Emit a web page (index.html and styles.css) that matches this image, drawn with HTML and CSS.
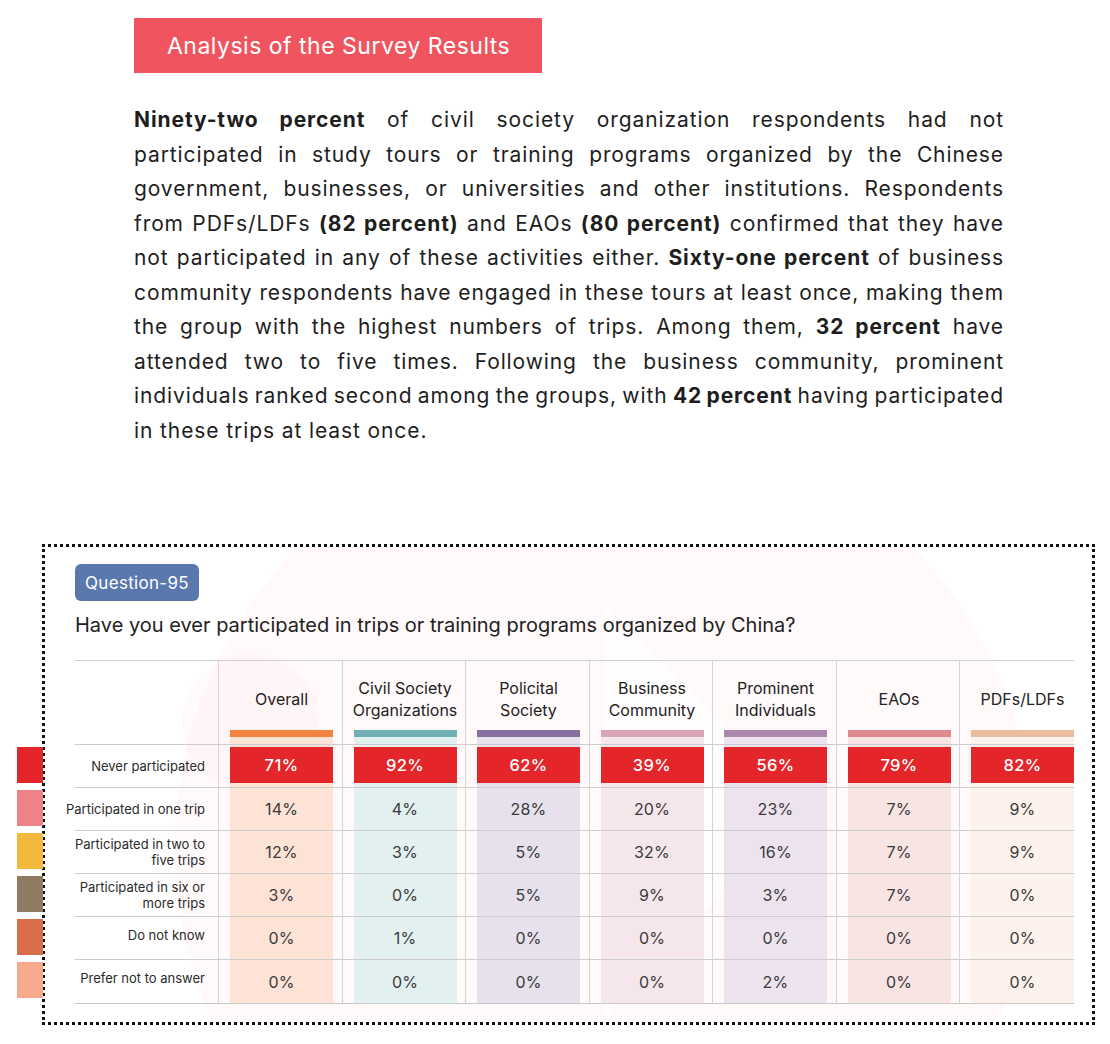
FILE: index.html
```html
<!DOCTYPE html>
<html lang="en">
<head>
<meta charset="utf-8">
<title>Analysis of the Survey Results</title>
<link rel="stylesheet" href="styles.css">
</head>
<body>
<main class="page">
  <h1 class="banner">Analysis of the Survey Results</h1>

  <p class="intro">
    <span class="ln"><b>Ninety-two percent</b> of civil society organization respondents had not</span>
    <span class="ln">participated in study tours or training programs organized by the Chinese</span>
    <span class="ln">government, businesses, or universities and other institutions. Respondents</span>
    <span class="ln">from PDFs/LDFs <b>(82 percent)</b> and EAOs <b>(80 percent)</b> confirmed that they have</span>
    <span class="ln">not participated in any of these activities either. <b>Sixty-one percent</b> of business</span>
    <span class="ln">community respondents have engaged in these tours at least once, making them</span>
    <span class="ln">the group with the highest numbers of trips. Among them, <b>32 percent</b> have</span>
    <span class="ln">attended two to five times. Following the business community, prominent</span>
    <span class="ln">individuals ranked second among the groups, with <b>42 percent</b> having participated</span>
    <span class="ln">in these trips at least once.</span>
  </p>

  <section class="card">
    <svg class="watermark" width="1047" height="475" viewBox="0 0 1047 475" aria-hidden="true">
      <circle cx="560" cy="300" r="430" fill="#f04a55" fill-opacity="0.03"/>
      <path d="M560 60 L760 260 L560 470 Z" fill="#ffffff" fill-opacity="0.6"/>
      <circle cx="205" cy="175" r="68" fill="#f04a55" fill-opacity="0.025"/>
    </svg>

    <div class="badge">Question-95</div>
    <h2 class="question">Have you ever participated in trips or training programs organized by China?</h2>

    <div class="table">
      <div class="row head">
        <div class="label"></div>
        <div class="hcell overall"><span class="hname">Overall</span><span class="hbar"></span><span class="htint"></span></div>
        <div class="hcell cso"><span class="hname">Civil Society<br>Organizations</span><span class="hbar"></span><span class="htint"></span></div>
        <div class="hcell pol"><span class="hname">Policital<br>Society</span><span class="hbar"></span><span class="htint"></span></div>
        <div class="hcell bus"><span class="hname">Business<br>Community</span><span class="hbar"></span><span class="htint"></span></div>
        <div class="hcell pro"><span class="hname">Prominent<br>Individuals</span><span class="hbar"></span><span class="htint"></span></div>
        <div class="hcell eao"><span class="hname">EAOs</span><span class="hbar"></span><span class="htint"></span></div>
        <div class="hcell pdf"><span class="hname">PDFs/LDFs</span><span class="hbar"></span><span class="htint"></span></div>
      </div>

      <div class="row top">
        <div class="label"><span class="swatch sw-red"></span><span class="ltext">Never participated</span></div>
        <div class="cell overall"><span class="fill"><span class="hi">71%</span></span></div>
        <div class="cell cso"><span class="fill"><span class="hi">92%</span></span></div>
        <div class="cell pol"><span class="fill"><span class="hi">62%</span></span></div>
        <div class="cell bus"><span class="fill"><span class="hi">39%</span></span></div>
        <div class="cell pro"><span class="fill"><span class="hi">56%</span></span></div>
        <div class="cell eao"><span class="fill"><span class="hi">79%</span></span></div>
        <div class="cell pdf"><span class="fill"><span class="hi">82%</span></span></div>
      </div>

      <div class="row">
        <div class="label"><span class="swatch sw-pink"></span><span class="ltext">Participated in one trip</span></div>
        <div class="cell overall"><span class="fill">14%</span></div>
        <div class="cell cso"><span class="fill">4%</span></div>
        <div class="cell pol"><span class="fill">28%</span></div>
        <div class="cell bus"><span class="fill">20%</span></div>
        <div class="cell pro"><span class="fill">23%</span></div>
        <div class="cell eao"><span class="fill">7%</span></div>
        <div class="cell pdf"><span class="fill">9%</span></div>
      </div>

      <div class="row">
        <div class="label"><span class="swatch sw-yellow"></span><span class="ltext">Participated in two to<br>five trips</span></div>
        <div class="cell overall"><span class="fill">12%</span></div>
        <div class="cell cso"><span class="fill">3%</span></div>
        <div class="cell pol"><span class="fill">5%</span></div>
        <div class="cell bus"><span class="fill">32%</span></div>
        <div class="cell pro"><span class="fill">16%</span></div>
        <div class="cell eao"><span class="fill">7%</span></div>
        <div class="cell pdf"><span class="fill">9%</span></div>
      </div>

      <div class="row">
        <div class="label"><span class="swatch sw-brown"></span><span class="ltext">Participated in six or<br>more trips</span></div>
        <div class="cell overall"><span class="fill">3%</span></div>
        <div class="cell cso"><span class="fill">0%</span></div>
        <div class="cell pol"><span class="fill">5%</span></div>
        <div class="cell bus"><span class="fill">9%</span></div>
        <div class="cell pro"><span class="fill">3%</span></div>
        <div class="cell eao"><span class="fill">7%</span></div>
        <div class="cell pdf"><span class="fill">0%</span></div>
      </div>

      <div class="row">
        <div class="label up"><span class="swatch sw-orange"></span><span class="ltext">Do not know</span></div>
        <div class="cell overall"><span class="fill">0%</span></div>
        <div class="cell cso"><span class="fill">1%</span></div>
        <div class="cell pol"><span class="fill">0%</span></div>
        <div class="cell bus"><span class="fill">0%</span></div>
        <div class="cell pro"><span class="fill">0%</span></div>
        <div class="cell eao"><span class="fill">0%</span></div>
        <div class="cell pdf"><span class="fill">0%</span></div>
      </div>

      <div class="row last">
        <div class="label up"><span class="swatch sw-peach"></span><span class="ltext">Prefer not to answer</span></div>
        <div class="cell overall"><span class="fill">0%</span></div>
        <div class="cell cso"><span class="fill">0%</span></div>
        <div class="cell pol"><span class="fill">0%</span></div>
        <div class="cell bus"><span class="fill">0%</span></div>
        <div class="cell pro"><span class="fill">2%</span></div>
        <div class="cell eao"><span class="fill">0%</span></div>
        <div class="cell pdf"><span class="fill">0%</span></div>
      </div>
    </div>
  </section>
</main>
</body>
</html>
```

FILE: styles.css
```css
* { box-sizing: border-box; }

html, body {
  margin: 0;
  padding: 0;
  background: #ffffff;
}

body {
  font-family: Inter, "Liberation Sans", sans-serif;
  color: #1f1f1f;
}

.page {
  width: 1110px;
  padding: 18px 0 0 42px;
}

.banner {
  margin: 0 0 0 92px;
  width: 408px;
  height: 55px;
  padding-left: 33px;
  display: flex;
  align-items: center;
  background: #f0555f;
  color: #ffffff;
  font-size: 23px;
  font-weight: 400;
  letter-spacing: 0.5px;
}

.intro {
  margin: 30px 0 0 92px;
  width: 870px;
  font-size: 21px;
  line-height: 34.5px;
  color: #1e1e1e;
  letter-spacing: 0.9px;
  word-spacing: -3px;
}

.intro b { font-weight: 700; }

.intro .ln {
  display: block;
  white-space: nowrap;
  text-align: justify;
  text-align-last: justify;
}

.intro .ln:last-child {
  text-align-last: left;
  word-spacing: 0;
}

.card {
  position: relative;
  margin-top: 96px;
  width: 1053px;
  border: 3px dotted #111111;
  padding: 17px 18px 18px 30px;
}

.watermark {
  position: absolute;
  left: 0;
  top: 0;
  pointer-events: none;
}

.badge {
  position: relative;
  display: flex;
  align-items: center;
  justify-content: center;
  width: 124px;
  height: 37px;
  border-radius: 6px;
  background: #5b78ae;
  color: #ffffff;
  font-size: 17px;
  letter-spacing: 0.3px;
}

.question {
  position: relative;
  margin: 11px 0 0;
  font-size: 20px;
  font-weight: 400;
  line-height: 26px;
  color: #222222;
  letter-spacing: 0;
}

.table {
  position: relative;
  margin-top: 22px;
  width: 999px;
  border-top: 1px solid #cfcfcf;
}

.row {
  position: relative;
  display: grid;
  grid-template-columns: 143px repeat(6, 123.5px) 115px;
  height: 43px;
  border-bottom: 1px solid #cdcdcd;
}

.row.head { height: 84px; }
.row.last { height: 44px; border-bottom-color: #c8c8c8; }

.label {
  display: flex;
  align-items: center;
  justify-content: flex-end;
  text-align: right;
  padding-right: 13px;
  font-size: 13px;
  line-height: 16px;
  color: #2a2a2a;
}

.ltext {
  white-space: nowrap;
  flex-shrink: 0;
}

.label.up { align-items: flex-start; padding-top: 10px; }

.swatch {
  position: absolute;
  left: -58px;
  top: 2px;
  width: 26px;
  height: 36px;
}

.sw-red { background: #e42529; }
.sw-pink { background: #ef8189; }
.sw-yellow { background: #f2b93c; }
.sw-brown { background: #8f7b62; }
.sw-orange { background: #d96f4a; }
.sw-peach { background: #f6a98d; }

.hcell, .cell {
  border-left: 1px solid #d5d5d5;
  padding-left: 11px;
}

.hcell {
  display: flex;
  flex-direction: column;
}

.hname {
  flex: 1;
  width: 103px;
  display: flex;
  align-items: center;
  justify-content: center;
  text-align: center;
  padding-top: 6px;
  font-size: 16px;
  line-height: 22px;
  color: #222222;
  white-space: nowrap;
}

.hbar {
  width: 103px;
  height: 7px;
}

.htint {
  width: 103px;
  height: 7px;
}

.fill {
  width: 103px;
  height: 100%;
  display: flex;
  align-items: center;
  justify-content: center;
  font-size: 16px;
  font-weight: 400;
  color: #3a3a3a;
  letter-spacing: 0.2px;
}

.row.top .fill { padding: 2px 0 4px; }

.hi {
  width: 103px;
  height: 100%;
  display: flex;
  align-items: center;
  justify-content: center;
  background: #e42529;
  color: #ffffff;
  font-weight: 500;
  font-size: 16.5px;
  letter-spacing: 0.4px;
}

.overall .hbar { background: #f2843f; }
.cso .hbar { background: #70b0b4; }
.pol .hbar { background: #876fa0; }
.bus .hbar { background: #d9a6b8; }
.pro .hbar { background: #ad88ad; }
.eao .hbar { background: #de8a8e; }
.pdf .hbar { background: #e9bd9e; }

.overall .htint, .overall .fill { background: #fde3d6; }
.cso .htint, .cso .fill { background: #e2f0f0; }
.pol .htint, .pol .fill { background: #e7e1ed; }
.bus .htint, .bus .fill { background: #f5e6ec; }
.pro .htint, .pro .fill { background: #ece3ef; }
.eao .htint, .eao .fill { background: #f9e4e4; }
.pdf .htint, .pdf .fill { background: #fcf1eb; }
```
